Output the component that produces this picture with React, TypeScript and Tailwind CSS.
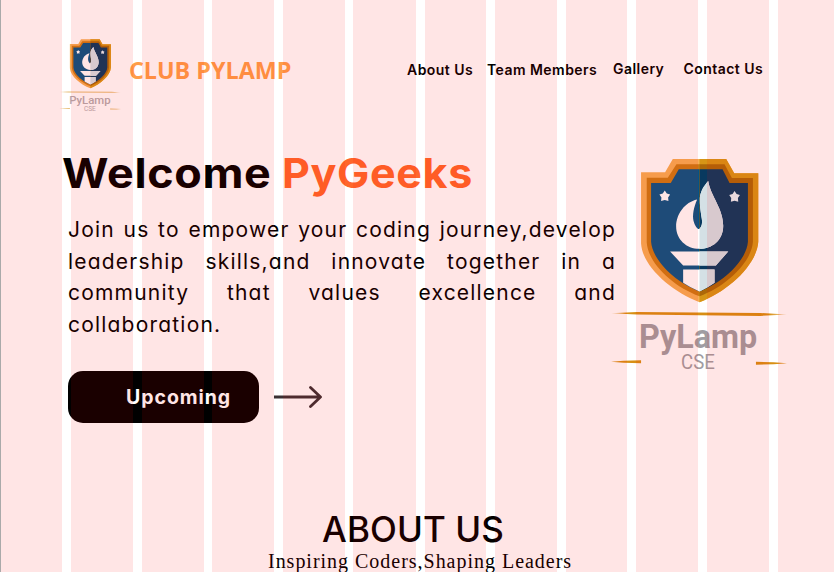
import type { ReactNode } from "react";

const columns = [
  "w-[62px]", "ml-[9px] w-[62px]", "ml-[9px] w-[62px]", "ml-[8px] w-[62px]",
  "ml-[9px] w-[62px]", "ml-[8px] w-[63px]", "ml-[9px] w-[61px]", "ml-[9px] w-[62px]",
  "ml-[9px] w-[61px]", "ml-[9px] w-[62px]", "ml-[9px] w-[62px]", "ml-[9px] w-[56px]",
];

const SHIELD = "M218 42H378L402 85H474V290C470 358 385 438 298 471C212 438 127 363 123 295V82H195Z";
const MIDDLE = "M229 58H373L395 99H458V290C454 351 378 424 298 453C218 424 144 354 140 292V98H203Z";
const INNER = "M236 73H367L388 114H443V290C439 345 372 410 298 439C224 410 157 345 153 290V114H212Z";
const FLAME = "M324 108C332 155 369 190 369 242C369 286 336 311 298 311C258 311 228 282 228 244C228 207 254 171 291 163C281 185 276 210 280 227C284 242 291 252 297 252C304 246 307 238 305 222C301 197 298 178 299 158C301 138 312 122 324 108Z";
const STAR = "M0-17L6-8L16-5L10 4L11 15L0 12L-11 15L-10 4L-16-5L-6-8Z";

type LogoProps = { id: string; className: string; textFill: string; textWeight: number; lineOpacity: number };

function Logo({ id, className, textFill, textWeight, lineOpacity }: LogoProps) {
  return (
    <svg viewBox="30 30 530 650" preserveAspectRatio="none" className={className}>
      <defs>
        <clipPath id={`${id}-right`}><rect x="298" y="30" width="262" height="450" /></clipPath>
        <linearGradient id={`${id}-gold`} x1="0" x2="1">
          <stop offset="0" stopColor="#d88f14" stopOpacity=".3" />
          <stop offset=".08" stopColor="#d88f14" />
          <stop offset=".9" stopColor="#d88f14" />
          <stop offset="1" stopColor="#d88f14" stopOpacity=".3" />
        </linearGradient>
      </defs>
      <path d={SHIELD} fill="#f5ae55" />
      <path d={MIDDLE} fill="#cc7a14" />
      <path d={INNER} fill="#055486" />
      <g clipPath={`url(#${id}-right)`}>
        <path d={SHIELD} fill="#d69516" />
        <path d={MIDDLE} fill="#ad6808" />
        <path d={INNER} fill="#08395f" />
      </g>
      <g fill="#fff">
        <path d={STAR} transform="translate(194 153)" />
        <path d={STAR} transform="translate(403 155)" fill="#e6f1f5" />
        <path d={FLAME} />
        <path d="M210 319H384L347 361H249Z" />
        <path d="M249 373H343V413Q322 428 298 439Q271 428 249 413Z" />
      </g>
      <g clipPath={`url(#${id}-right)`} fill="#d4e0e5">
        <path d={FLAME} />
        <path d="M210 319H384L347 361H249Z" />
        <path d="M249 373H343V413Q322 428 298 439Z" />
      </g>
      <g opacity={lineOpacity}>
        <path d="M33 504L110 500L480 503L560 508L480 512L110 508Z" fill={`url(#${id}-gold)`} />
        <path d="M33 649L70 646L123 645V654L70 652Z" fill="#d88f14" />
        <path d="M560 654L520 651L467 649V658L520 657Z" fill="#d88f14" />
      </g>
      <g fill={textFill}>
        <text x="117" y="608" fontSize="98" fontWeight={textWeight} textLength="354" lengthAdjust="spacingAndGlyphs" fontFamily="Roboto, sans-serif">PyLamp</text>
        <text x="243" y="671" fontSize="60" textLength="101" lengthAdjust="spacingAndGlyphs" fontFamily="Roboto, sans-serif">CSE</text>
      </g>
    </svg>
  );
}

function Line({ children, last = false }: { children: ReactNode; last?: boolean }) {
  return (
    <div className={last ? "whitespace-nowrap" : "whitespace-nowrap text-justify [text-align-last:justify]"}>
      {children}
    </div>
  );
}

export default function App() {
  return (
    <div className="relative h-[572px] w-[834px] overflow-hidden border-l border-[#aaa] bg-white font-['Inter',sans-serif] text-black">
      <header className="flex h-[150px] items-start">
        <Logo id="small" className="ml-[58px] mt-[38px] h-[74px] w-[62px] shrink-0 overflow-visible" textFill="#b3abae" textWeight={500} lineOpacity={0.6} />
        <div className="ml-[8px] mt-[54px] w-[162px] whitespace-nowrap font-['Open_Sans',sans-serif] text-[23.3px] font-bold leading-8 text-[#ff9d48]">
          CLUB PYLAMP
        </div>
        <nav className="ml-[116px] mt-[60px] flex whitespace-nowrap text-[14px] font-semibold leading-5 tracking-[0.45px]">
          <a className="w-[80px]">About Us</a>
          <a className="w-[126px]">Team Members</a>
          <a className="-mt-px w-[70.5px]">Gallery</a>
          <a className="-mt-px">Contact Us</a>
        </nav>
      </header>

      <main className="flex h-[350px]">
        <section className="w-[609px] pl-[67px] [font-feature-settings:'cv11']">
          <h1 className="-ml-[6px] flex whitespace-nowrap text-[41px] font-bold leading-[46px] tracking-[0.6px]">
            <span className="w-[220px] origin-left scale-x-[1.095]">Welcome</span>
            <span className="origin-left scale-x-[1.05] text-[#ff662a]">PyGeeks</span>
          </h1>
          <div className="mt-[18px] w-[548px] text-[21px] leading-[31.5px] tracking-[1.2px]">
            <Line>Join us to empower your coding journey,develop</Line>
            <Line>leadership skills,and innovate together in a</Line>
            <Line>community that values excellence and</Line>
            <Line last>collaboration.</Line>
          </div>
          <div className="mt-[31px] flex items-center">
            <button className="h-[52px] w-[191px] rounded-[15px] bg-black pl-[58px] pt-[2px] text-left text-[19.5px] font-bold tracking-[0.95px] text-white">
              Upcoming
            </button>
            <svg className="ml-[15px] h-6 w-[50px]" viewBox="0 0 50 24" fill="none" stroke="#3a3033" strokeWidth="2.8">
              <path d="M0 12H46M36.500 2.500L46.500 12L36.500 21.500" strokeLinejoin="round" strokeLinecap="round" />
            </svg>
          </div>
        </section>
        <Logo id="hero" className="mt-[5px] h-[217px] w-[177px] shrink-0 overflow-visible" textFill="#a09da2" textWeight={700} lineOpacity={1} />
      </main>

      <section className="flex flex-col items-start whitespace-nowrap">
        <h2 className="ml-[321px] mt-[8px] text-[35px] font-medium leading-[42px] tracking-[0.1px]">ABOUT US</h2>
        <p className="ml-[267px] text-[20px] leading-[22px] tracking-[0.98px] font-['Liberation_Serif',serif]">
          Inspiring Coders,Shaping Leaders
        </p>
      </section>

      <div className="pointer-events-none absolute inset-y-0 -left-px flex w-[834px]">
        {columns.map((column, index) => (
          <div key={index} className={`h-full shrink-0 bg-[#ff0000]/10 ${column}`} />
        ))}
      </div>
    </div>
  );
}
